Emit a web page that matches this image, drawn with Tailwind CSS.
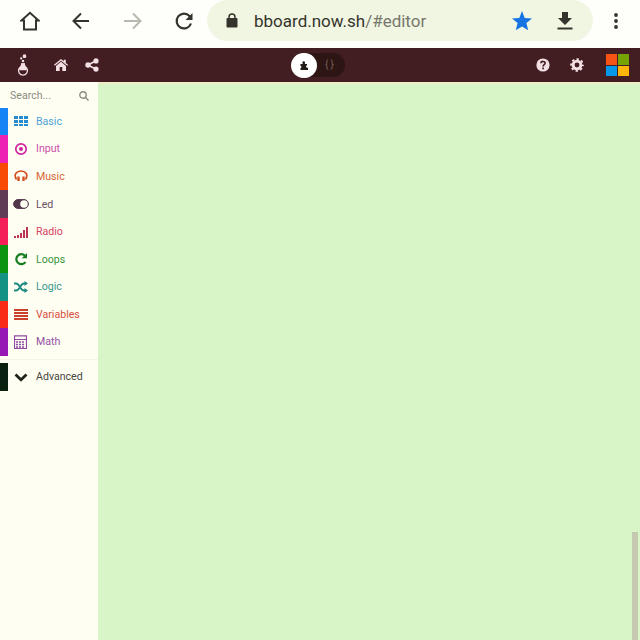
<!DOCTYPE html>
<html lang="en">
<head>
<meta charset="utf-8">
<title>bboard editor</title>
<script src="https://cdn.jsdelivr.net/npm/@tailwindcss/browser@4"></script>
</head>
<body class="w-[640px] h-[640px] overflow-hidden flex flex-col bg-[#fdfdf5] font-['Roboto',sans-serif]">
<header class="relative h-12 shrink-0 bg-[#fefefa] text-[#34342c]">
  <div class="absolute left-[207px] top-0 w-[386px] h-[41px] rounded-full bg-[#f1f6e2]"></div>
  <div class="relative flex items-center h-[41px]">
    <svg class="w-5 h-5 ml-5 shrink-0" viewBox="0 0 20 20" fill="none" stroke="currentColor" stroke-width="2"><path d="M4 18.500V9.500H1.500L10 1.800l8.500 7.700H16v9z"/></svg>
    <svg class="w-5 h-5 ml-[31px] shrink-0" viewBox="0 0 20 20" fill="none" stroke="currentColor" stroke-width="2"><path d="M18 10H3M10 2.500 2.500 10l7.500 7.500"/></svg>
    <svg class="w-5 h-5 ml-[32px] shrink-0 text-[#b9b9b1]" viewBox="0 0 20 20" fill="none" stroke="currentColor" stroke-width="2"><path d="M1 10h15M10 2.500 17.500 10 10 17.500"/></svg>
    <svg class="w-5 h-5 ml-[31px] shrink-0" viewBox="0 0 20 20" fill="none" stroke="currentColor" stroke-width="2.200"><path d="M17 12.500A7.400 7.400 0 1 1 15.500 5L17 7"/><path d="M18.500 2v7h-7z" fill="currentColor" stroke="none"/></svg>
    <svg class="w-3 h-[15px] ml-[32px] shrink-0" viewBox="0 0 12 15"><path d="M3 6V4a3 3 0 0 1 6 0v2" fill="none" stroke="currentColor" stroke-width="1.500"/><rect x=".5" y="5" width="11" height="9.500" rx="1" fill="currentColor"/></svg>
    <div class="ml-[16px] w-[258px] text-[17px] leading-5 whitespace-nowrap">bboard.now.sh<span class="text-[#77776d]">/#editor</span></div>
    <svg class="w-5 h-5 shrink-0 text-[#1773e2]" viewBox="0 0 20 20" fill="currentColor"><path d="m10 0 2.700 6.900 7.300.5-5.600 4.700 1.800 7.200L10 15.400l-6.200 3.900 1.800-7.200L0 7.400l7.300-.5z"/></svg>
    <svg class="w-4 h-[18px] ml-[25px] shrink-0" viewBox="0 0 16 18" fill="currentColor"><path d="M5 0h6v6h4l-7 7-7-7h4zM.5 15.500h15v2H.5z"/></svg>
    <svg class="w-1 h-4 ml-[41px] shrink-0" viewBox="0 0 4 16" fill="currentColor"><circle cx="2" cy="2" r="1.900"/><circle cx="2" cy="8" r="1.900"/><circle cx="2" cy="14" r="1.900"/></svg>
  </div>
</header>
<nav class="relative h-[34px] shrink-0 flex items-center bg-[#421e22] text-[#f3dfe4]">
  <svg class="w-3 h-[22px] ml-[17px] shrink-0" viewBox="0 0 12 22" fill="none" stroke="currentColor" stroke-width="1.300"><path d="M5 9v3.300a4.500 4.500 0 1 0 2 0V9"/><path d="M4.900 10h2.200l2 5.500H2.900z" fill="currentColor"/><circle cx="7.500" cy="2.200" r="1.200" fill="currentColor"/><circle cx="4.200" cy="4.400" r=".5"/><circle cx="6" cy="7" r=".6"/></svg>
  <svg class="w-3.5 h-3 ml-[25px] shrink-0" viewBox="0 0 14 12" fill="currentColor"><path d="m7 0 2.800 2.300V.7h2v3.200L14 5.800l-.8 1L7 1.700.8 6.800l-.8-1z"/><path d="m7 2.800 5 4.100V12H8.300V8H5.700v4H2V6.900z"/></svg>
  <svg class="w-3.5 h-[14px] ml-[17px] shrink-0" viewBox="0 0 14 14" fill="currentColor"><path d="m11 2.700-8 4.300 8 4.300" fill="none" stroke="currentColor" stroke-width="1.700"/><circle cx="11" cy="2.900" r="2.600"/><circle cx="3" cy="7" r="2.700"/><circle cx="11" cy="11.100" r="2.600"/></svg>
  <div class="ml-[192px] w-[54px] h-6 rounded-full bg-[#2d1514] flex items-center">
    <div class="w-[26px] h-[25px] rounded-full bg-white flex items-center justify-center text-[#251b16]">
      <svg class="w-2 h-[9px]" viewBox="0 0 8 9" fill="currentColor"><path d="M.5 3h2.300C2 1.500 2.500.2 3.700.2S5.500 1.500 4.800 3H7v1.600C5.700 4.200 5.700 7 7 6.500L8 7v2H.5V7C2 6.500 1.800 5 .5 5z"/></svg>
    </div>
    <span class="ml-2 text-[10px] leading-3 tracking-[2px] text-[#75605a]">{}</span>
  </div>
  <svg class="w-[14px] h-[14px] ml-[191px] shrink-0" viewBox="0 0 14 14"><circle cx="7" cy="7" r="6.600" fill="currentColor"/><path d="M4.900 5.200C5 2.800 9.300 3 9.100 5.200 9 6.800 7.100 6.600 7.100 8.500M7.100 9.500v1.700" fill="none" stroke="#421e22" stroke-width="1.700"/></svg>
  <svg class="w-[14px] h-[14px] ml-[20px] shrink-0" viewBox="0 0 14 14" fill="none" stroke="currentColor"><circle cx="7" cy="7" r="3.900" stroke-width="2.900"/><circle cx="7" cy="7" r="5.900" stroke-width="1.900" stroke-dasharray="2.320 2.314" stroke-dashoffset="1.160"/></svg>
  <div class="absolute right-[11px] top-[6px] w-[23px] h-[22px] grid grid-cols-2 gap-[1px]">
    <div class="bg-[#f65314]"></div><div class="bg-[#75a404]"></div><div class="bg-[#0898ea]"></div><div class="bg-[#ffb50a]"></div>
  </div>
</nav>
<main class="flex flex-1 min-h-0">
  <aside class="w-[98px] shrink-0 bg-[#fefef3] text-[10.600px]">
    <div class="h-[25.500px] pt-[2px] flex items-center justify-between pl-[10px] pr-[9px] text-[#8c8b80]"><span>Search...</span>
      <svg class="w-[10px] h-[10px]" viewBox="0 0 10 10" fill="none" stroke="currentColor" stroke-width="1.400"><circle cx="4" cy="4" r="3.200"/><path d="m6.300 6.300 3.200 3.200"/></svg></div>
    <div class="h-[27.600px] flex items-center border-l-8 border-[#1684f4] text-[#4da2d8]"><svg class="w-[14px] h-[14px] mx-[6px]" viewBox="0 0 14 14" fill="#278bd0"><path d="M0 2h4v3H0zm5 0h4v3H5zm5 0h4v3h-4zM0 6h4v3H0zm5 0h4v3H5zm5 0h4v3h-4zM0 10h4v2H0zm5 0h4v2H5zm5 0h4v2h-4z"/></svg><span class="ml-[2px] pt-px">Basic</span></div>
    <div class="h-[27.600px] flex items-center border-l-8 border-[#ed22b5] text-[#cf4da9]"><svg class="w-[14px] h-[14px] mx-[6px]" viewBox="0 0 14 14" fill="none" stroke="#cf249f" stroke-width="1.700"><circle cx="7" cy="7" r="5.200"/><circle cx="7" cy="7" r="2" fill="#cf249f" stroke="none"/></svg><span class="ml-[2px] pt-px">Input</span></div>
    <div class="h-[27.600px] flex items-center border-l-8 border-[#f94a05] text-[#d86535]"><svg class="w-[14px] h-[14px] mx-[6px]" viewBox="0 0 14 14" fill="none" stroke="#d54e20" stroke-width="1.700"><path d="M2.500 10.500C-1 5 3 2 7 2s8 3 4.500 8.500"/><path d="M4.500 7.500v4.500M9.500 7.500v4.500" stroke-width="2.400"/></svg><span class="ml-[2px] pt-px">Music</span></div>
    <div class="h-[27.600px] flex items-center border-l-8 border-[#603b55] text-[#66505e]"><svg class="w-4 h-[14px] mx-[5px]" viewBox="0 0 16 14"><rect x=".6" y="2.600" width="14.800" height="8.800" rx="4.400" fill="#53374c" stroke="#53374c"/><circle cx="11" cy="7" r="3.800" fill="#fefef3"/></svg><span class="ml-[2px] pt-px">Led</span></div>
    <div class="h-[27.600px] flex items-center border-l-8 border-[#f41f59] text-[#d94166]"><svg class="w-[14px] h-[14px] mx-[6px]" viewBox="0 0 14 14" fill="#bd3453"><path d="M0 11h2v2H0zm3-1h2v3H3zm3-2h2v5H6zm3-3h2v8H9zm3-3h2v11h-2z"/></svg><span class="ml-[2px] pt-px">Radio</span></div>
    <div class="h-[27.600px] flex items-center border-l-8 border-[#0b9312] text-[#38963c]"><svg class="w-[14px] h-[14px] mx-[6px]" viewBox="0 0 14 14" fill="none" stroke="#167c20" stroke-width="2.200"><path d="M11.500 10A5 5 0 1 1 10.800 3.600"/><path d="M13 1v5.200H7.800z" fill="#167c20" stroke="none"/></svg><span class="ml-[2px] pt-px">Loops</span></div>
    <div class="h-[27.600px] flex items-center border-l-8 border-[#149384] text-[#36978c]"><svg class="w-[14px] h-[14px] mx-[6px]" viewBox="0 0 14 14" fill="none" stroke="#1b8a80" stroke-width="1.800"><path d="M0 3.500h2C6 3.500 6 10.500 10 10.500h2M0 10.500h2C6 10.500 6 3.500 10 3.500h2"/><path d="m10.500 1 3.500 2.500L10.500 6zm0 7 3.500 2.500-3.500 2.500z" fill="#1b8a80" stroke="none"/></svg><span class="ml-[2px] pt-px">Logic</span></div>
    <div class="h-[27.600px] flex items-center border-l-8 border-[#f92b17] text-[#d94d3c]"><svg class="w-[14px] h-[14px] mx-[6px]" viewBox="0 0 14 14" fill="#c9432c"><path d="M0 2h14v2H0zm0 3h14v2H0zm0 3h14v2H0zm0 3h14v2H0z"/></svg><span class="ml-[2px] pt-px">Variables</span></div>
    <div class="h-[28px] flex items-center border-l-8 border-[#9618b5] text-[#9550a4]"><svg class="w-[13px] h-[14px] ml-[6px] mr-[7px]" viewBox="0 0 13 14" fill="none" stroke="#9049a0"><path d="M.5.900h12v12.600H.5zM.5 4.500h12" stroke-width="1.200"/><path d="M2 7h9M2 9.500h9M2 12h9" stroke-width="1.600" stroke-dasharray="2 1"/></svg><span class="ml-[2px]">Math</span></div>
    <div class="h-[7px] pt-[3px]"><div class="h-px bg-[#f6f4e4]"></div></div>
    <div class="h-[27.600px] flex items-center border-l-8 border-[#0b2110] text-[#46463f]"><svg class="w-[14px] h-[14px] mx-[6px]" viewBox="0 0 14 14" fill="none" stroke="#20251c" stroke-width="2.800"><path d="m1.500 4.500 5.500 5.300 5.500-5.300"/></svg><span class="ml-[2px]">Advanced</span></div>
  </aside>
  <section class="relative flex-1 bg-[#d8f5c8] border-t-2 border-[#f1ebc8]">
    <div class="absolute right-[2px] bottom-0 w-[6px] h-[108px] bg-[#c5c9b0]"></div>
  </section>
</main>
</body>
</html>
